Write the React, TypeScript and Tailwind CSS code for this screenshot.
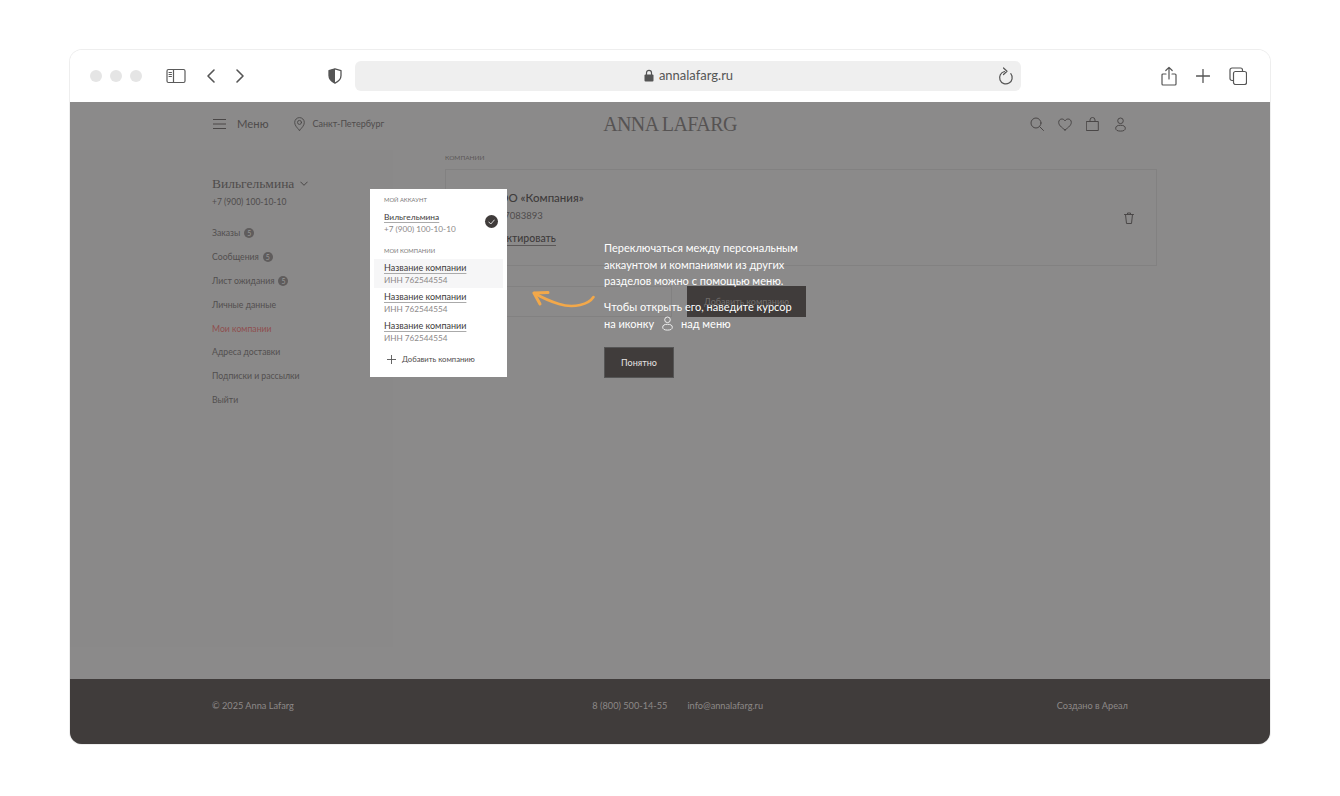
import React from "react";

const Ink = "#4a4747";

function Sv({ w, h, children, stroke = "#555", sw = 1.2, className = "" }: any) {
  return (
    <svg width={w} height={h} viewBox={`0 0 ${w} ${h}`} fill="none" stroke={stroke} strokeWidth={sw} strokeLinecap="round" strokeLinejoin="round" className={className}>
      {children}
    </svg>
  );
}

function UserIcon({ stroke, w = 11, h = 15 }: any) {
  return (
    <svg width={w} height={h} viewBox="0 0 11 15" fill="none" stroke={stroke} strokeWidth={1}>
      <circle cx="5.5" cy="3.8" r="2.8" />
      <ellipse cx="5.5" cy="11.2" rx="4.8" ry="2.9" />
    </svg>
  );
}

function Toolbar() {
  return (
    <div className="h-[52px] shrink-0 bg-white flex items-center relative pb-[1px]">
      <div className="flex gap-2 ml-5">
        <div className="w-3 h-3 rounded-full bg-[#e5e5e5]" />
        <div className="w-3 h-3 rounded-full bg-[#e5e5e5]" />
        <div className="w-3 h-3 rounded-full bg-[#e5e5e5]" />
      </div>
      <div className="ml-[24px]">
        <Sv w={20} h={16} stroke="#5a5a5a" sw={1.2}>
          <rect x="1" y="1.5" width="18" height="13" rx="1.5" />
          <path d="M7.5 1.5v13" />
          <path d="M3 4.5h2.5M3 6.5h2.5M3 8.5h2.5" strokeWidth={1} />
        </Sv>
      </div>
      <div className="ml-[20px]">
        <Sv w={10} h={16} stroke="#555" sw={1.6}><path d="M8 2 2 8l6 6" /></Sv>
      </div>
      <div className="ml-[19px]">
        <Sv w={10} h={16} stroke="#555" sw={1.6}><path d="m2 2 6 6-6 6" /></Sv>
      </div>
      <div className="ml-[83px]">
        <svg width="14" height="16" viewBox="0 0 14 16">
          <path d="M7 .8 1 2.6v5c0 3.5 2.5 6 6 7.6 3.5-1.6 6-4.1 6-7.6v-5Z" fill="#fff" stroke="#555" strokeWidth="1.3" strokeLinejoin="round" />
          <path d="M7 .8 1 2.6v5c0 3.5 2.5 6 6 7.6Z" fill="#555" />
        </svg>
      </div>
      <div className="ml-[13px] w-[666px] h-[30px] bg-[#efefef] rounded-md flex items-center justify-center relative">
        <div className="flex items-center gap-[5px] ml-[1px]">
          <svg width="10" height="13" viewBox="0 0 10 13">
            <path d="M2.5 6V3.8a2.5 2.5 0 0 1 5 0V6" fill="none" stroke="#555" strokeWidth="1.2" />
            <rect x=".5" y="5.5" width="9" height="7" rx="1" fill="#555" />
          </svg>
          <span className="text-[13px] text-[#555] font-['Lato','Noto_Sans',sans-serif]">annalafarg.ru</span>
        </div>
        <div className="absolute right-[6px] top-[6px]">
          <Sv w={18} h={19} stroke="#555" sw={1.2}>
            <path d="M7.5 4.5a6.3 6.3 0 1 0 6.3 2.2" />
            <path d="M6.5 1 10 4.3 6.5 7.5" />
          </Sv>
        </div>
      </div>
      <div className="ml-[140px]">
        <Sv w={16} h={20} stroke="#555" sw={1.2}>
          <path d="M5 8H2a1 1 0 0 0-1 1v9a1 1 0 0 0 1 1h12a1 1 0 0 0 1-1V9a1 1 0 0 0-1-1h-3" />
          <path d="M8 13V1.5M4.8 4.5 8 1.3l3.2 3.2" />
        </Sv>
      </div>
      <div className="ml-[19px]">
        <Sv w={14} h={14} stroke="#555" sw={1.3}><path d="M7 .5v13M.5 7h13" /></Sv>
      </div>
      <div className="ml-[19px]">
        <Sv w={18} h={18} stroke="#555" sw={1.2}>
          <rect x="4.5" y="4.5" width="13" height="13" rx="2" />
          <path d="M4.5 13.5H3a2 2 0 0 1-2-2V3a2 2 0 0 1 2-2h8.5a2 2 0 0 1 2 2v1.5" />
        </Sv>
      </div>
    </div>
  );
}

function Nav() {
  return (
    <div className="h-[48px] shrink-0 px-[143px] grid grid-cols-[1fr_auto_1fr] items-center text-[#4f4c4c] pb-[4px]">
      <div className="flex items-center">
        <Sv w={13} h={12} stroke={Ink} sw={1}><path d="M0 1.5h13M0 6h13M0 10.5h13" /></Sv>
        <span className="ml-[11px] text-[11.300px] font-['Lato','Noto_Sans',sans-serif] text-[#4f4c4c]">Меню</span>
        <div className="ml-[26px]">
          <Sv w={11} h={14} stroke={Ink} sw={0.9}>
            <path d="M5.5 13.3C2.5 10.3.7 8 .7 5.4a4.8 4.8 0 0 1 9.6 0c0 2.6-1.8 4.9-4.8 7.9Z" />
            <circle cx="5.5" cy="5.4" r="2" />
          </Sv>
        </div>
        <span className="ml-[7px] text-[9px] font-['Lato','Noto_Sans',sans-serif] text-[#4f4c4c]">Санкт-Петербург</span>
      </div>
      <div className="text-[20px] font-['Liberation_Serif',serif] text-[#565353] tracking-[-0.6px] leading-none">ANNA LAFARG</div>
      <div className="flex justify-end items-center gap-[14px] pr-[1px]">
        <Sv w={14} h={14} stroke={Ink} sw={1}><circle cx="6" cy="6" r="5" /><path d="m9.7 9.7 3.8 3.8" /></Sv>
        <Sv w={14} h={13} stroke={Ink} sw={1}><path d="M7 12C3 9 .7 7 .7 4.3 .7 2.3 2.2 1 3.9 1 5.2 1 6.3 1.7 7 2.9 7.7 1.7 8.8 1 10.1 1c1.7 0 3.2 1.3 3.2 3.3C13.300 7 11 9 7 12Z" /></Sv>
        <Sv w={13} h={14} stroke={Ink} sw={1}><path d="M.7 4.500h11.600v9H.7ZM4 4.500V3a2.500 2.500 0 0 1 5 0v1.500" /></Sv>
        <div className="ml-[2px]"><UserIcon stroke={Ink} /></div>
      </div>
    </div>
  );
}

function Badge() {
  return <span className="w-[10px] h-[10px] rounded-full bg-[#5f5c5c] text-[7px] leading-[10px] text-center text-[#999] inline-block ml-[4px]">5</span>;
}

function Sidebar() {
  const items: [string, boolean][] = [
    ["Заказы", true],
    ["Сообщения", true],
    ["Лист ожидания", true],
    ["Личные данные", false],
    ["Мои компании", false],
    ["Адреса доставки", false],
    ["Подписки и рассылки", false],
    ["Выйти", false],
  ];
  return (
    <div className="w-[323px] h-[497px] bg-[#8a8989] pl-[142px] pt-[26px] shrink-0">
      <div className="flex items-center h-[16px]">
        <span className="text-[13.500px] font-['Liberation_Serif',serif] text-[#4f4c4c]">Вильгельмина</span>
        <div className="ml-[6px]"><Sv w={8} h={6} stroke={Ink} sw={1}><path d="m.7 1 3.300 3.300L7.300 1" /></Sv></div>
      </div>
      <div className="mt-[3px] h-[14px] leading-[14px] text-[8.500px] font-['Lato','Noto_Sans',sans-serif] text-[#4f4c4c]">+7 (900) 100-10-10</div>
      <div className="mt-[17px] flex flex-col gap-[9.800px] font-['Lato','Noto_Sans',sans-serif] text-[8.700px]">
        {items.map(([t, b]) => (
          <div key={t} className={`h-[14px] flex items-center ${t === "Мои компании" ? "text-[#8f4f4f]" : "text-[#524f4f]"}`}>
            {t}
            {b && <Badge />}
          </div>
        ))}
      </div>
    </div>
  );
}

function Content() {
  return (
    <div className="ml-[52px] w-[712px] font-['Lato','Noto_Sans',sans-serif]">
      <div className="h-[19px] pt-[3px] text-[6.500px] leading-[10px] text-[#5b5858]">КОМПАНИИ</div>
      <div className="h-[97px] border border-[#828181] relative pl-[34px] pt-[20px]">
        <div className="ml-[10px] text-[11.500px] leading-[15px] font-medium text-[#3e3b3b]">ООО «Компания»</div>
        <div className="mt-[4px] text-[9.500px] leading-[14px] text-[#4f4c4c]">ИНН 7083893</div>
        <div className="ml-[3px] mt-[8px] text-[10.500px] leading-[14px] font-medium text-[#3e3b3b] inline-block border-b border-[#5b5858]">Редактировать</div>
        <div className="absolute right-[22px] top-[42px]">
          <Sv w={10} h={12} stroke={Ink} sw={1}><path d="M.5 2.500h9M3.500 2.500V1h3v1.500M1.500 2.500l1 9h5l1-9" /></Sv>
        </div>
      </div>
      <div className="mt-[20px] flex items-stretch h-[31px]">
        <div className="w-[227px] border border-[#828181]" />
        <div className="ml-[15px] w-[119px] bg-[#403c3b] flex items-center justify-center text-[9px] text-[#6f6b6a]">Добавить компанию</div>
      </div>
    </div>
  );
}

function Footer() {
  return (
    <div className="h-[65px] shrink-0 bg-[#403c3b] px-[142px] flex items-center justify-between text-[9.200px] text-[#8d8988] font-['Lato','Noto_Sans',sans-serif] pb-[11px]">
      <span>© 2025 Anna Lafarg</span>
      <div className="flex gap-[20px] ml-[5px]">
        <span>8 (800) 500-14-55</span>
        <span>info@annalafarg.ru</span>
      </div>
      <span>Создано в Ареал</span>
    </div>
  );
}

function Company({ active }: { active?: boolean }) {
  return (
    <div className={`h-[29px] mx-[4px] pl-[10px] pt-[3px] ${active ? "bg-[#f6f6f7]" : ""}`}>
      <div className="text-[9px] leading-[12px] text-[#3e3b3b] underline underline-offset-[1.500px] decoration-[#aaa]">Название компании</div>
      <div className="text-[8.200px] leading-[12px] text-[#8b8888]">ИНН 762544554</div>
    </div>
  );
}

function Dropdown() {
  return (
    <div className="absolute left-[300px] top-[87px] w-[137px] h-[188px] bg-white font-['Lato','Noto_Sans',sans-serif]">
      <div className="pl-[14px] pt-[7px] text-[5.800px] leading-[8px] text-[#777]">МОЙ АККАУНТ</div>
      <div className="pl-[14px] pt-[7px] relative">
        <div className="text-[8.400px] leading-[12px] text-[#3e3b3b] underline underline-offset-[1.500px] decoration-[#aaa]">Вильгельмина</div>
        <div className="text-[8.200px] leading-[12px] text-[#8b8888]">+7 (900) 100-10-10</div>
        <div className="absolute right-[9px] top-[11px] w-[13px] h-[13px] rounded-full bg-[#403c3b] flex items-center justify-center">
          <Sv w={7} h={6} stroke="#ddd" sw={1}><path d="m.8 3 2 2 3.500-4" /></Sv>
        </div>
      </div>
      <div className="pl-[14px] pt-[12px] pb-[4px] text-[5.800px] leading-[8px] text-[#777]">МОИ КОМПАНИИ</div>
      <Company active />
      <Company />
      <Company />
      <div className="flex items-center pl-[17px] pt-[7px]">
        <Sv w={9} h={9} stroke="#555" sw={0.9}><path d="M4.500 0v9M0 4.500h9" /></Sv>
        <span className="ml-[6px] text-[7.700px] leading-[12px] text-[#4f4c4c]">Добавить компанию</span>
      </div>
    </div>
  );
}

function Hint() {
  return (
    <div className="absolute left-[534px] top-[138px] w-[210px] text-white font-['Lato','Noto_Sans',sans-serif] text-[11px] leading-[16.500px]">
      <div>Переключаться между персональным</div>
      <div>аккаунтом и компаниями из других</div>
      <div>разделов можно с помощью меню.</div>
      <div className="mt-[9.500px]">Чтобы открыть его, наведите курсор</div>
      <div className="flex items-center h-[16.500px]">
        на иконку
        <span className="ml-[8px] mr-[8px] inline-flex"><UserIcon stroke="#eee" /></span>
        над меню
      </div>
      <div className="mt-[15px] w-[70px] h-[31px] pt-[1px] bg-[#403c3b] border border-[#555] flex items-center justify-center text-[9px] text-[#e5e3e2]">Понятно</div>
    </div>
  );
}

function Arrow() {
  return (
    <svg className="absolute left-[461px] top-[186px]" width="66" height="24" viewBox="0 0 66 24" fill="none" stroke="#f2a84a" strokeLinecap="round" strokeLinejoin="round">
      <path d="M62.500 9C58 16 43 21 28 16 18 13 10 9 3 5" strokeWidth="2.600" />
      <path d="M3 5l14-.500M3 5l6 11" strokeWidth="3" />
    </svg>
  );
}

export default function App() {
  return (
    <div className="w-[1340px] h-[796px] bg-white pt-[50px] px-[70px] overflow-hidden">
      <div className="h-[694px] rounded-xl overflow-hidden flex flex-col relative ring-1 ring-[#eeeeee]">
        <Toolbar />
        <div className="flex-1 bg-[#8b8a8a] flex flex-col relative">
          <Nav />
          <div className="flex-1 flex">
            <Sidebar />
            <Content />
          </div>
          <Footer />
          <Dropdown />
          <Arrow />
          <Hint />
        </div>
      </div>
    </div>
  );
}
